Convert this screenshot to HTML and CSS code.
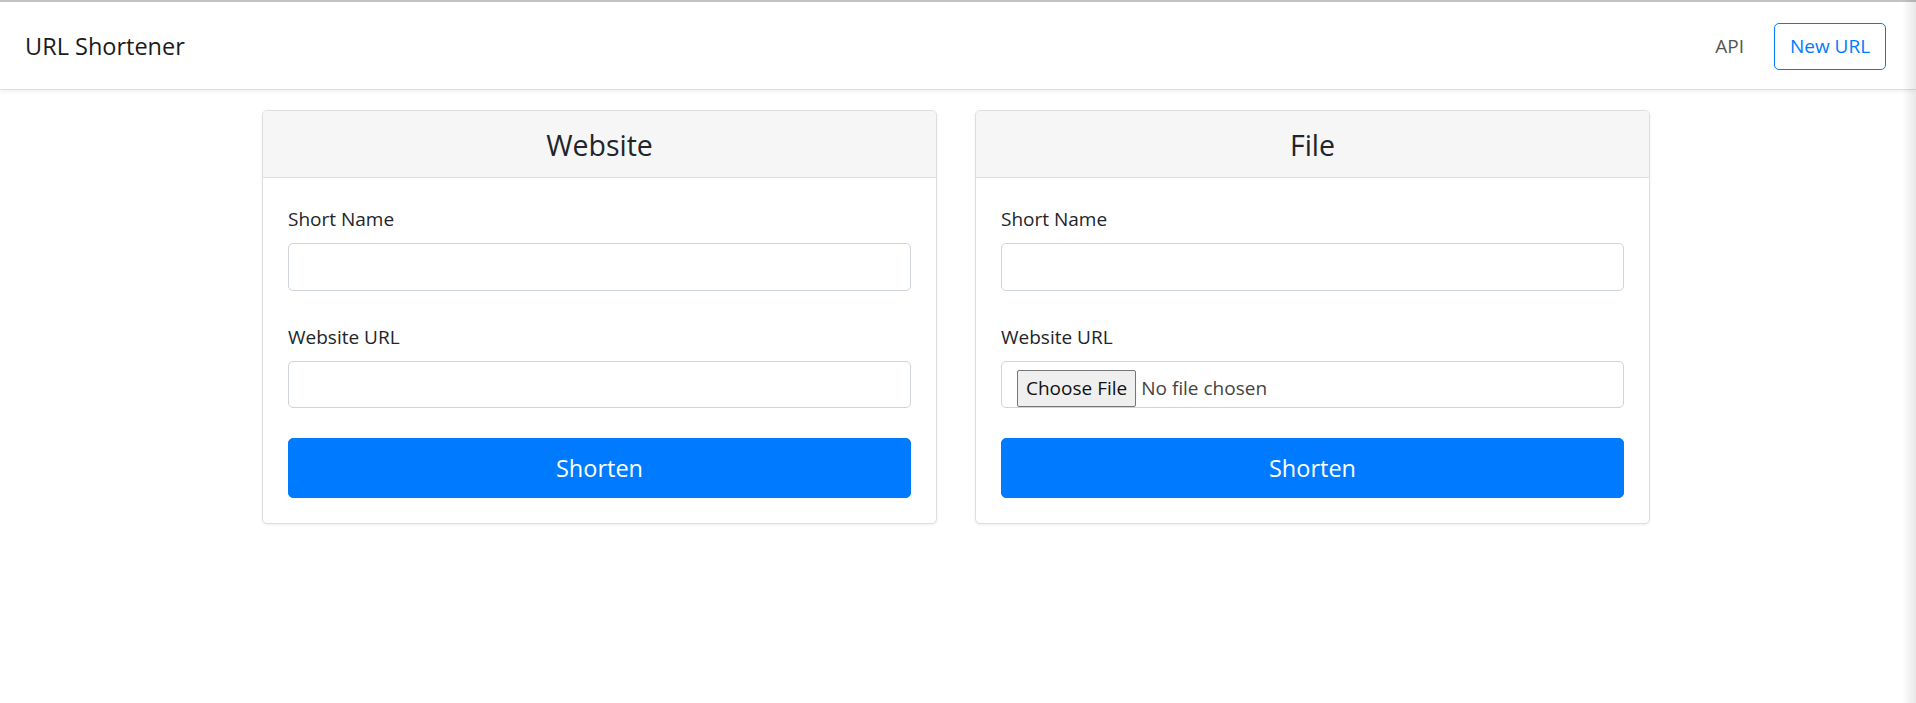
FILE: index.html
```html
<!DOCTYPE html>
<html lang="en">
<head>
<meta charset="utf-8">
<title>URL Shortener</title>
<link rel="stylesheet" href="styles.css">
</head>
<body>
<div class="topline"></div>
<nav class="navbar">
  <a class="brand" href="#">URL Shortener</a>
  <div class="nav-right">
    <a class="nav-link" href="#">API</a>
    <a class="btn-outline" href="#">New URL</a>
  </div>
</nav>
<main class="main">
  <div class="cards">
    <section class="card">
      <div class="card-header">Website</div>
      <form class="card-body">
        <div class="form-group">
          <label class="label">Short Name</label>
          <input class="form-control" type="text">
        </div>
        <div class="form-group">
          <label class="label">Website URL</label>
          <input class="form-control" type="text">
        </div>
        <button class="btn-primary" type="button">Shorten</button>
      </form>
    </section>
    <section class="card">
      <div class="card-header">File</div>
      <form class="card-body">
        <div class="form-group">
          <label class="label">Short Name</label>
          <input class="form-control" type="text">
        </div>
        <div class="form-group">
          <label class="label">Website URL</label>
          <div class="form-control file-control">
            <span class="file-btn">Choose File</span><span class="file-text">No file chosen</span>
          </div>
        </div>
        <button class="btn-primary" type="button">Shorten</button>
      </form>
    </section>
  </div>
</main>
<div class="edge-shade"></div>
</body>
</html>
```

FILE: styles.css
```css
* { box-sizing: border-box; }
html, body { margin: 0; padding: 0; background: #fff; }
body {
  font-family: "Open Sans", "Noto Sans", sans-serif;
  font-size: 19px;
  color: #212529;
  min-height: 703px;
  position: relative;
}
.topline { height: 2px; background: #c4c4c4; }
.navbar {
  height: 87px;
  display: flex;
  align-items: center;
  justify-content: space-between;
  padding: 1px 30px 0 25px;
  background: #fff;
  box-shadow: 0 1px 0 rgba(0,0,0,0.08), 0 2px 5px rgba(0,0,0,0.08);
  position: relative;
  z-index: 1;
}
.brand {
  font-size: 23.5px;
  line-height: 36px;
  color: #1b1b1b;
  text-decoration: none;
}
.nav-right { display: flex; align-items: center; gap: 20px; }
.nav-link {
  padding: 10px;
  font-size: 19px;
  color: #555;
  text-decoration: none;
}
.btn-outline {
  display: inline-flex;
  align-items: center;
  justify-content: center;
  width: 112px;
  height: 47px;
  border: 1.25px solid #007bff;
  border-radius: 5px;
  color: #007bff;
  font-size: 19px;
  text-decoration: none;
}
.main { padding: 21px 4px 0 0; }
.cards {
  width: 1388px;
  margin: 0 auto;
  display: grid;
  grid-template-columns: 675px 675px;
  column-gap: 38px;
}
.card {
  border: 1px solid #dedede;
  border-radius: 5px;
  background: #fff;
  box-shadow: 0 1px 3px rgba(0,0,0,0.07);
  overflow: hidden;
}
.card-header {
  padding: 16px 25px 14px;
  line-height: 36px;
  font-size: 28.5px;
  text-align: center;
  background: #f6f6f6;
  border-bottom: 1px solid #dedede;
  color: #212529;
}
.card-body { padding: 25px; margin: 0; }
.form-group { margin-bottom: 30px; }
.label {
  display: block;
  line-height: 30px;
  padding-top: 1px;
  margin-bottom: 9px;
  font-size: 19px;
  color: #212529;
}
.form-control {
  display: block;
  width: 100%;
  height: 47.5px;
  padding: 7.5px 15px;
  border: 1.25px solid #ced4da;
  border-radius: 5px;
  font-family: inherit;
  font-size: 19px;
  color: #495057;
  background: #fff;
  outline: none;
}
.file-control { display: flex; align-items: center; padding: 0 15px; }
.file-btn {
  display: inline-flex;
  align-items: center;
  height: 37px;
  margin-top: 8px;
  padding: 0 8px;
  background: #efefef;
  border: 1px solid #767676;
  border-radius: 2px;
  color: #111;
  font-size: 19px;
  white-space: nowrap;
}
.file-text {
  margin-left: 5px;
  margin-top: 8px;
  color: #444;
  font-size: 19px;
  white-space: nowrap;
}
.btn-primary {
  display: block;
  width: 100%;
  height: 60px;
  border: 1.25px solid #007bff;
  border-radius: 5px;
  background: #007bff;
  color: #fff;
  font-family: inherit;
  font-size: 23.5px;
}
.edge-shade {
  position: absolute;
  top: 0;
  right: 0;
  width: 14px;
  height: 703px;
  background: linear-gradient(to right, rgba(0,0,0,0), rgba(0,0,0,0.09));
  z-index: 2;
  pointer-events: none;
}
```
